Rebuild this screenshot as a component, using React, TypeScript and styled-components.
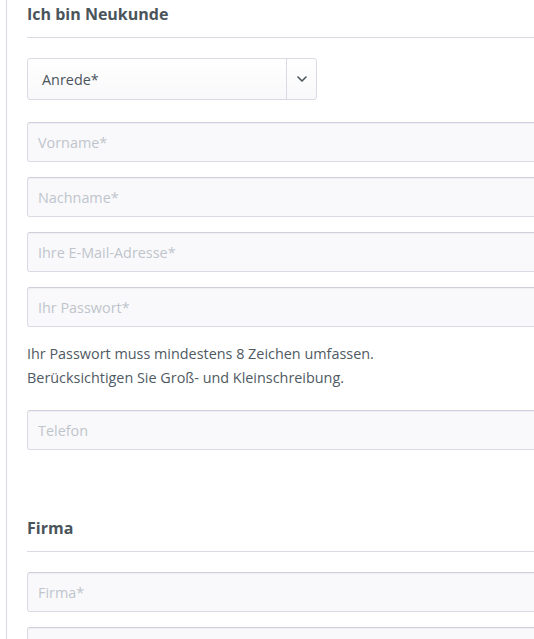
import React from "react";
import styled, { createGlobalStyle } from "styled-components";

const Global = createGlobalStyle`
  html, body { margin: 0; padding: 0; background: #fff; overflow: hidden; }
  body { font-family: "Open Sans", "Noto Sans", sans-serif; color: #4a545b; }
  * { box-sizing: border-box; }
`;

const Panel = styled.div`
  margin-left: 6px;
  border-left: 1px solid #dadae5;
  padding-left: 20px;
  width: 620px;
  height: 639px;
  overflow: hidden;
`;

const Section = styled.fieldset<{ $top?: number }>`
  border: 0;
  margin: ${(p) => p.$top ?? 0}px 0 0 0;
  padding: 0;
  min-width: 0;
`;

const Title = styled.h2`
  margin: 0 0 20px 0;
  font-size: 16px;
  line-height: 28px;
  font-weight: 700;
  color: #4a545b;
  padding-bottom: 9px;
  border-bottom: 1px solid #dadae5;
`;

const SelectWrap = styled.div`
  position: relative;
  width: 290px;
  height: 42px;
  margin-bottom: 22px;
  border: 1px solid #dadae5;
  border-radius: 3px;
  background: linear-gradient(#ffffff, #f8f8fa);
  display: flex;
  align-items: center;
`;

const SelectLabel = styled.span`
  flex: 1;
  padding-left: 14px;
  font-size: 14.4px;
  color: #4a545b;
`;

const Arrow = styled.span`
  width: 30px;
  height: 100%;
  border-left: 1px solid #dadae5;
  display: flex;
  align-items: center;
  justify-content: center;
`;

const Input = styled.input<{ $mb?: number }>`
  display: block;
  width: 100%;
  height: 40px;
  margin: 0 0 ${(p) => p.$mb ?? 15}px 0;
  padding: 0 10px;
  border: 1px solid #dadae5;
  border-top-color: #cfcfdd;
  border-radius: 3px;
  background: #f9f9fb;
  box-shadow: inset 0 1px 1px rgba(0, 0, 0, 0.04);
  font-family: "Open Sans", "Noto Sans", sans-serif;
  font-size: 14.4px;
  color: #4a545b;
  outline: none;
  &::placeholder { color: #bfc5cc; opacity: 1; }
`;

const Hint = styled.p`
  margin: 0 0 20px 0;
  font-size: 14.4px;
  line-height: 24px;
  color: #4f5a63;
`;

export default function App() {
  return (
    <>
      <Global />
      <Panel>
        <Section>
          <Title>Ich bin Neukunde</Title>
          <SelectWrap>
            <SelectLabel>Anrede*</SelectLabel>
            <Arrow>
              <svg width="10" height="6" viewBox="0 0 10 6" fill="none">
                <path d="M1 1l4 4 4-4" stroke="#4a545b" strokeWidth="1.6" strokeLinecap="round" strokeLinejoin="round" />
              </svg>
            </Arrow>
          </SelectWrap>
          <Input placeholder="Vorname*" />
          <Input placeholder="Nachname*" />
          <Input placeholder="Ihre E-Mail-Adresse*" />
          <Input placeholder="Ihr Passwort*" type="password" />
          <Hint>
            Ihr Passwort muss mindestens 8 Zeichen umfassen.
            <br />
            Berücksichtigen Sie Groß- und Kleinschreibung.
          </Hint>
          <Input placeholder="Telefon" $mb={0} />
        </Section>
        <Section $top={64}>
          <Title>Firma</Title>
          <Input placeholder="Firma*" />
          <Input placeholder="" />
        </Section>
      </Panel>
    </>
  );
}
